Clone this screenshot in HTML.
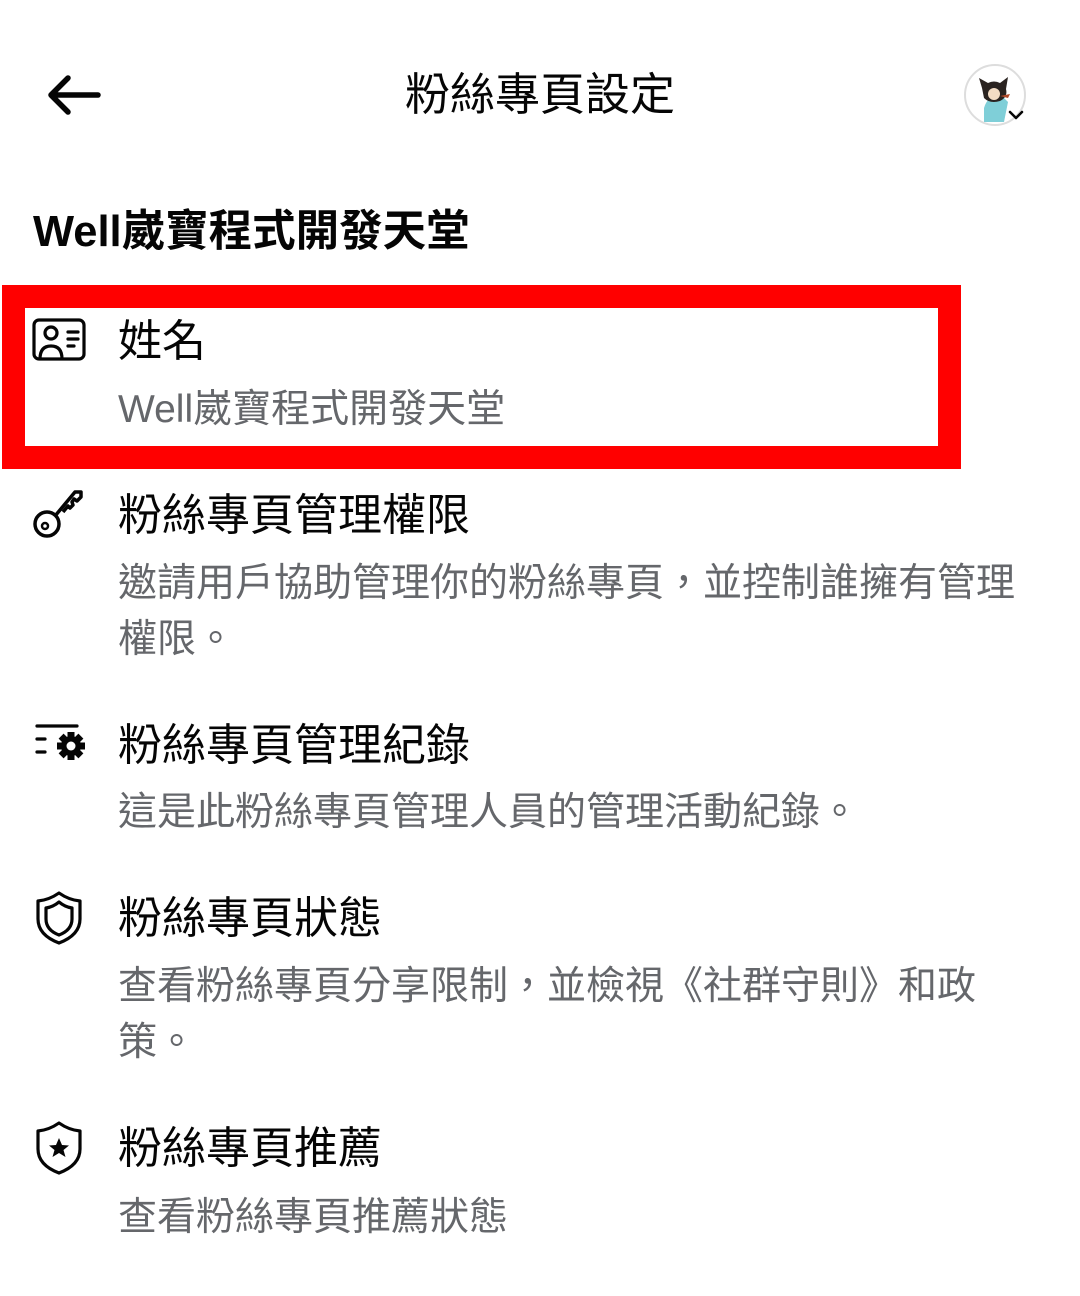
<!DOCTYPE html>
<html><head><meta charset="utf-8"><style>
body{margin:0;width:1080px;height:1296px;background:#fff;position:relative;overflow:hidden;font-family:"Liberation Sans","Noto Sans CJK TC",sans-serif;color:#050505}
.a{position:absolute;white-space:nowrap}
.t{font-size:44px;line-height:44px;left:118px}
.s{font-size:39px;line-height:56px;left:118px;color:#65676b}
svg{position:absolute}
</style></head><body>
<svg style="left:44px;top:72px" width="60" height="46" viewBox="0 0 60 46"><path d="M54 23H8M24 6L7 23l17 17" fill="none" stroke="#050505" stroke-width="5.5" stroke-linecap="round" stroke-linejoin="round"/></svg>
<div class="a" style="left:405px;top:72px;font-size:45px;line-height:46px">粉絲專頁設定</div>
<svg style="left:962px;top:62px" width="66" height="66" viewBox="0 0 66 66">
<circle cx="33" cy="33" r="30" fill="#fff" stroke="#ddd" stroke-width="2"/>
<path d="M22 46q4-14 18-12l6 6-4 20H22z" fill="#7fcfd8"/>
<path d="M20 26l-3-10 9 5q6-3 12 0l8-6-2 12q2 8-6 12-10 3-16-3z" fill="#2a2320"/>
<ellipse cx="32" cy="32" rx="6" ry="6" fill="#f3dcc4"/>
<path d="M38 34l10-2-2 4z" fill="#b04a2a"/>
<path d="M48 50l6 6 6-6" fill="none" stroke="#050505" stroke-width="2.5" stroke-linecap="round" stroke-linejoin="round"/>
</svg>
<div class="a" style="left:33px;top:209px;font-size:43.5px;line-height:46px;font-weight:bold">Well崴寶程式開發天堂</div>
<div class="a" style="left:2px;top:285px;width:913px;height:138px;border:23px solid #ff0000;background:#fff"></div>
<svg style="left:32px;top:318px" width="54" height="44" viewBox="0 0 54 44"><rect x="2" y="2" width="50" height="39" rx="5" fill="none" stroke="#050505" stroke-width="3.2"/><circle cx="19" cy="15" r="6" fill="none" stroke="#050505" stroke-width="3.2"/><path d="M8 41q0-13 11-13t11 13" fill="none" stroke="#050505" stroke-width="3.2"/><path d="M36 14h10M36 21h10M36 28h6" stroke="#050505" stroke-width="3.2" stroke-linecap="round"/></svg>
<div class="a t" style="top:320px">姓名</div>
<div class="a s" style="top:382px">Well崴寶程式開發天堂</div>
<svg style="left:32px;top:486px" width="54" height="54" viewBox="0 0 54 54"><circle cx="15" cy="38" r="12" fill="none" stroke="#050505" stroke-width="3.5"/><circle cx="13" cy="40" r="3" fill="none" stroke="#050505" stroke-width="2.5"/><path d="M23 30l20-24 6 0 0 5-4 4-3-2-2 3 1 3-3 3-2-2-5 6" fill="none" stroke="#050505" stroke-width="3.5" stroke-linejoin="round"/></svg>
<div class="a t" style="top:494px">粉絲專頁管理權限</div>
<div class="a s" style="top:556px">邀請用戶協助管理你的粉絲專頁，並控制誰擁有管理<br>權限。</div>
<svg style="left:34px;top:722px" width="54" height="46" viewBox="0 0 54 46"><path d="M3 4h40M3 17h8M3 30h8" stroke="#050505" stroke-width="3.2" stroke-linecap="round"/><g transform="translate(37 24)"><circle r="10" fill="#050505"/><g fill="#050505"><rect x="-3.5" y="-14" width="7" height="28"/><rect x="-3.5" y="-14" width="7" height="28" transform="rotate(45)"/><rect x="-3.5" y="-14" width="7" height="28" transform="rotate(90)"/><rect x="-3.5" y="-14" width="7" height="28" transform="rotate(135)"/></g><circle r="4.5" fill="#fff"/></g></svg>
<div class="a t" style="top:724px">粉絲專頁管理紀錄</div>
<div class="a s" style="top:785px">這是此粉絲專頁管理人員的管理活動紀錄。</div>
<svg style="left:34px;top:890px" width="50" height="56" viewBox="0 0 50 56"><path d="M25 3q10 7 21 8v18q0 16-21 24Q4 45 4 29V11q11-1 21-8z" fill="none" stroke="#050505" stroke-width="3.2" stroke-linejoin="round"/><path d="M25 12q6 5 13 6v11q0 11-13 16Q12 40 12 29V18q7-1 13-6z" fill="none" stroke="#050505" stroke-width="3.2" stroke-linejoin="round"/></svg>
<div class="a t" style="top:897px">粉絲專頁狀態</div>
<div class="a s" style="top:959px">查看粉絲專頁分享限制，並檢視《社群守則》和政<br>策。</div>
<svg style="left:34px;top:1120px" width="50" height="56" viewBox="0 0 50 56"><path d="M25 3q10 7 21 8v18q0 16-21 24Q4 45 4 29V11q11-1 21-8z" fill="none" stroke="#050505" stroke-width="3.2" stroke-linejoin="round"/><path d="M25 18l3 7 7 .5-5.5 4.5 2 7-6.5-4-6.5 4 2-7L15 25.5l7-.5z" fill="#050505"/></svg>
<div class="a t" style="top:1127px">粉絲專頁推薦</div>
<div class="a s" style="top:1190px">查看粉絲專頁推薦狀態</div>
</body></html>
